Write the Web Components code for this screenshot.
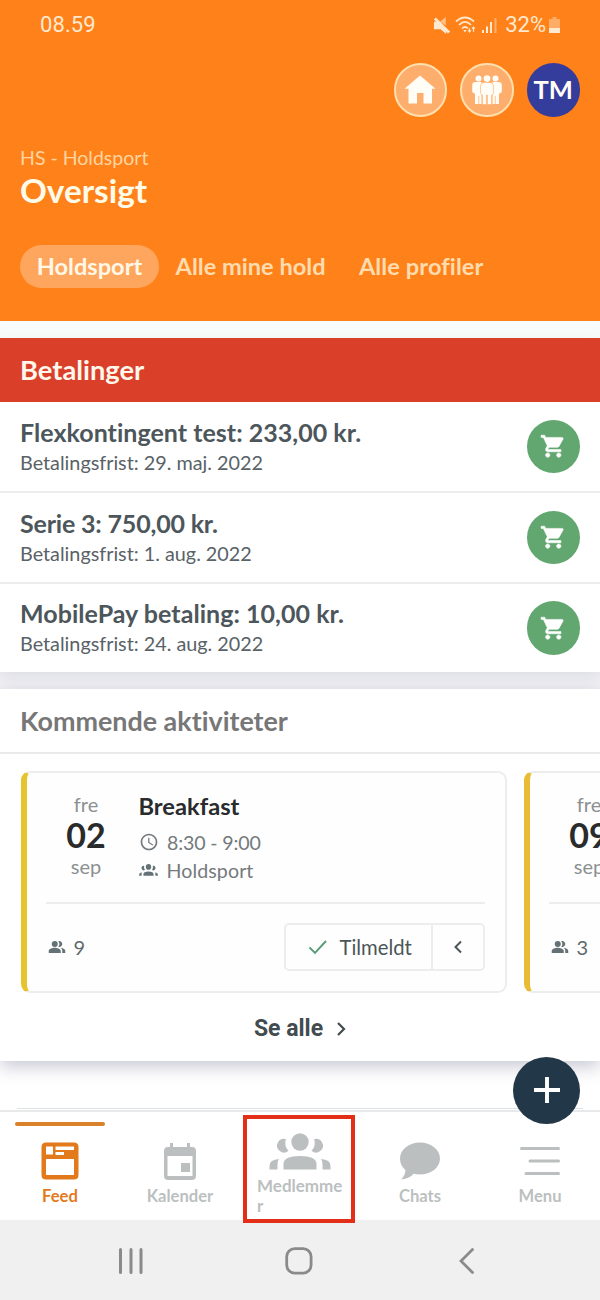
<!DOCTYPE html>
<html lang="da">
<head>
<meta charset="utf-8">
<title>Holdsport</title>
<style>
html,body{margin:0;padding:0}
body{width:600px;height:1300px;overflow:hidden;background:#fff;font-family:Lato,"Open Sans",sans-serif;font-variant-ligatures:none}
</style>
</head>
<body>
<hs-app></hs-app>
<script>
const ICONS = {
  mute:['0 0 18 18','<path d="M1 5h4l3 2.500 6 7V18l-6-5H1z"/><path d="M7.500 5L13.500 0v9z" opacity=".6"/><path d="M2 1.500L17 16.500" stroke="currentColor" stroke-width="3"/>'],
  wifi:['0 0 22 18','<g fill="none" stroke="currentColor" stroke-width="1.700"><path d="M1 5.500Q10 -2.500 19 5.500M4 9Q10 3 16 9M7 12.500Q10 9.500 13 12.500"/></g><path d="M8.300 14h3.400L10 16.500z"/><path d="M14.500 17l-2-2.800h1.400v-2h1.200v2h1.400zM18.500 10l2 2.800h-1.400v3h-1.200v-3h-1.400z"/>'],
  signal:['0 0 16 16','<path d="M0 13h2v3H0zM4 9.500h2V16H4z"/><path d="M8 5h2v11H8z"/><path d="M12.500 1h2v15h-2z" opacity=".45"/>'],
  battery:['0 0 11 17','<path d="M3.500 0h4v2H11v9H0V2h3.500z" opacity=".42"/><path d="M0 11h11v5H0z"/>'],
  home:['0 0 32 30','<path d="M16 .5L31.500 13.700H28V28.500H19.500V18H13V28.500H4.500V13.700H.5z"/>'],
  people:['0 0 32 30','<circle cx="7.500" cy="3.600" r="3"/><circle cx="24.500" cy="3.600" r="3"/><path d="M4.500 7h6v22h-2.300v-8h-.7v8H4V19L1.200 17V10q0-3 3.300-3zM27.500 7h-6v22h2.300v-8h.7v8H28V19l2.800-2V10q0-3-3.300-3z"/><path d="M13 7.500h6q3.500 0 3.500 3.500v7.500L20.600 20v9.500h-4.200V20h-.8v9.500h-4.200V20L9.500 18.500V11Q9.500 7.500 13 7.500z" stroke="#feae6c" stroke-width=".6"/><circle cx="16" cy="3.600" r="3.300"/>'],
  cart:['0 0 24 24','<path d="M7 18c-1.100 0-1.990.9-1.990 2S5.900 22 7 22s2-.9 2-2-.9-2-2-2zM1 2v2h2l3.600 7.590-1.350 2.450c-.16.280-.25.610-.25.960 0 1.100.9 2 2 2h12v-2H7.420c-.14 0-.25-.11-.25-.25l.03-.12.900-1.630h7.450c.75 0 1.410-.41 1.750-1.030l3.580-6.490A1 1 0 0 0 20 4H5.210l-.94-2H1zm16 16c-1.100 0-1.990.9-1.990 2s.89 2 1.990 2 2-.9 2-2-.9-2-2-2z" stroke="currentColor" stroke-width=".5"/>'],
  clock:['0 0 24 24','<path d="M11.990 2C6.470 2 2 6.480 2 12s4.470 10 9.990 10C17.520 22 22 17.520 22 12S17.520 2 11.990 2zM12 20c-4.420 0-8-3.580-8-8s3.580-8 8-8 8 3.580 8 8-3.580 8-8 8zm.5-13H11v6l5.250 3.150.75-1.230-4.500-2.670z"/>'],
  group:['0 0 62 37','<circle cx="31" cy="9" r="8.700"/><path d="M17 6.200a10.500 10.500 0 0 0 2.500 11.500A6.800 6.800 0 1 1 17 6.200zM45 6.200a10.500 10.500 0 0 1-2.500 11.500A6.800 6.800 0 1 0 45 6.200z"/><path d="M14.500 36.500V31q0-8 16.500-8t16.500 8v5.500zM.5 36.500V33q0-6.500 9.500-7-1.500 2-1.500 5v5.500zM61.500 36.500V33q0-6.500-9.500-7 1.500 2 1.500 5v5.500z"/>'],
  duo:['0 0 24 24','<path d="M16.670 13.130C18.040 14.060 19 15.320 19 17v3h4v-3c0-2.180-3.570-3.470-6.330-3.870z"/><circle cx="9" cy="8" r="4"/><path d="M15 12c2.210 0 4-1.790 4-4s-1.790-4-4-4c-.47 0-.91.100-1.330.240a5.980 5.980 0 0 1 0 7.520c.42.140.86.240 1.330.240zM9 13c-2.670 0-8 1.340-8 4v3h16v-3c0-2.660-5.330-4-8-4z"/>'],
  check:['0 0 20 16','<path d="M1.500 8.500L7 14L18 2" fill="none" stroke="currentColor" stroke-width="1.900"/>'],
  left:['0 0 10 14','<path d="M8 1.500L2.500 7L8 12.500" fill="none" stroke="currentColor" stroke-width="2"/>'],
  right:['0 0 10 14','<path d="M2 1L8 7L2 13" fill="none" stroke="currentColor" stroke-width="2.200"/>'],
  feed:['0 0 38 38','<path fill-rule="evenodd" d="M5 .5h28q4.500 0 4.500 4.500v28q0 4.500-4.500 4.500H5Q.5 37.500.5 33V5Q.5.5 5 .5zM5 4.500v8h7v-8zm9.500 0V8H33V4.500zM14.500 10v3H23v-3zM5 17v16h28V17z"/>'],
  calendar:['0 0 34 38','<path fill-rule="evenodd" d="M7 1h3v4h14V1h3v4h2q4 0 4 4v25q0 4-4 4H5q-4 0-4-4V9q0-4 4-4h2zM4.500 14v20h25V14z"/><path d="M18 21h9v9h-9z"/>'],
  chat:['0 0 40 38','<path d="M20 .5C31 .5 40 7.500 40 16.500S31 32.500 20 32.500q-3.500 0-6.500-.8Q10 36.500 1 37.500 5 34 5.500 28 0 23.500 0 16.500C0 7.500 9 .5 20 .5z"/>'],
  menu:['0 0 40 30','<path d="M1.500 2.500H38.500M10 15H38.500M6 27.500H38.500" fill="none" stroke="currentColor" stroke-width="3" stroke-linecap="round"/>'],
  recents:['0 0 26 26','<path d="M2.500 1.500v23M13 1.500v23M23 1.500v23" fill="none" stroke="currentColor" stroke-width="3" stroke-linecap="round"/>'],
  square:['0 0 28 28','<rect x="1.700" y="1.700" width="24.400" height="24.400" rx="8" fill="none" stroke="currentColor" stroke-width="2.800"/>'],
  back:['0 0 16 26','<path d="M13.500 1.500L2 13L13.500 24.500" fill="none" stroke="currentColor" stroke-width="2.800" stroke-linecap="round"/>'],
  plus:['0 0 26 26','<path d="M13 0v26M0 13h26" fill="none" stroke="currentColor" stroke-width="3.900"/>']
};
const define = (name, render) => customElements.define(name, class extends HTMLElement {
  constructor(){ super(); this.attachShadow({mode:'open'}); }
  connectedCallback(){ this.shadowRoot.innerHTML = render(this); }
});
const attr = (el, n) => el.getAttribute(n) || '';

define('hs-icon', el => {
  const [box, body] = ICONS[attr(el,'name')];
  return `<style>:host{display:block;flex:none;width:${attr(el,'w')}px;height:${attr(el,'h')}px}svg{display:block;width:100%;height:100%}</style>
  <svg viewBox="${box}" fill="currentColor" preserveAspectRatio="none">${body}</svg>`;
});

define('hs-status', () => `<style>
:host{display:flex;align-items:center;height:50px;padding:0 40px;color:#ffe9cf;font:22px/50px Roboto,sans-serif}
.time{flex:1;letter-spacing:.1px}.icons{display:flex;align-items:center;gap:5px}
.pct{margin:0 -2px 0 2px}</style>
<span class="time">08.59</span><div class="icons"><hs-icon name="mute" w="17" h="17"></hs-icon><hs-icon name="wifi" w="22" h="18"></hs-icon><hs-icon name="signal" w="16" h="16"></hs-icon><span class="pct">32%</span><hs-icon name="battery" w="11" h="17"></hs-icon></div>`);

define('hs-avatar', el => `<style>
:host{display:flex;align-items:center;justify-content:center;box-sizing:border-box;width:53.500px;height:53.500px;border-radius:50%;color:#fffdf5;background:#feae6c;border:2px solid #fee0ae;font:700 25.500px/1 Lato,sans-serif}
:host([solid]){background:#343c9c;border:0}</style><slot></slot>`);

define('hs-pill', () => `<style>
:host{display:flex;align-items:center;height:43px;padding:0 16.700px;border-radius:22px;color:#fedcae;font:700 23.600px/43px Lato,sans-serif;white-space:nowrap}
:host([active]){background:#fea65e;color:#fff8e6}</style><slot></slot>`);

define('hs-header', () => `<style>
:host{display:block;height:321px;background:#ff811a}
.avatars{display:flex;justify-content:flex-end;gap:13px;padding:13px 20px 0}
.club{margin:29.500px 20px 0;color:#fed5a0;font-size:19.500px;line-height:24px}
h1{margin:0 20px 0;color:#fffbe9;font-size:33.300px;line-height:40px;font-weight:700}
nav{display:flex;margin:35px 0 0 20px}</style>
<hs-status></hs-status>
<div class="avatars"><hs-avatar><hs-icon name="home" w="32" h="30"></hs-icon></hs-avatar><hs-avatar><hs-icon name="people" w="32" h="30"></hs-icon></hs-avatar><hs-avatar solid>TM</hs-avatar></div>
<div class="club">HS - Holdsport</div><h1>Oversigt</h1>
<nav><hs-pill active>Holdsport</hs-pill><hs-pill>Alle mine hold</hs-pill><hs-pill style="font-variant-ligatures:normal;letter-spacing:.1px">Alle profiler</hs-pill></nav>`);

define('hs-payment', () => `<style>
:host{display:flex;align-items:center;box-sizing:border-box;height:91px;padding:0 20px;border-bottom:2px solid #ecedee}
:host([last]){border:0}
.text{flex:1}.title{color:#4c565b;font-weight:700;font-size:25px;line-height:30px}
.due{color:#596267;font-size:19.800px;line-height:30px}
.btn{display:flex;align-items:center;justify-content:center;width:53.500px;height:53.500px;border-radius:50%;background:#62a770;color:#fff}</style>
<div class="text"><div class="title"><slot name="title"></slot></div><div class="due"><slot></slot></div></div>
<div class="btn"><hs-icon name="cart" w="26.500" h="26.500"></hs-icon></div>`);

define('hs-payments', () => `<style>
:host{display:block;margin-top:17px;height:334px;position:relative;box-shadow:0 5px 12px rgba(90,90,130,.12)}
h2{margin:0;height:64px;padding:0 20px;background:#d93f29;color:#fff7ec;font-size:27.300px;line-height:64px;font-weight:700}
</style><h2>Betalinger</h2><slot></slot>`);

define('hs-activity', el => `<style>
:host{display:block;flex:none;box-sizing:border-box;width:486px;height:222px;padding:18px 20px 0 19px;border:2px solid #ecedee;border-left:6px solid var(--accent,#e5c42e);border-radius:9px;background:#fefefe}
.top{display:grid;grid-template-columns:80px 1fr;column-gap:12.500px;height:111px;border-bottom:2px solid #ecedee}
.date{display:flex;flex-direction:column;align-items:center;color:#8b9091;font-size:20px;line-height:26px}
.day{color:#292b2c;font-size:34px;line-height:36px;font-weight:700}
.name{color:#292b2c;font-size:23.700px;line-height:30px;font-weight:700;margin-bottom:7px}
.line{display:flex;align-items:center;gap:8.500px;height:28px;color:#73797c;font-size:19.600px;white-space:nowrap}
.foot{display:flex;align-items:center;height:86px}
.count{display:flex;align-items:center;gap:8px;flex:1;color:#60696c;font-size:20px;padding-left:1.500px}
.seg{display:flex;box-sizing:border-box;width:201px;height:48px;border:2px solid #ecedee;border-radius:5px}
.main{display:flex;align-items:center;gap:11.500px;flex:1;padding-left:22px;font-size:20.300px;color:#4c5558;border-right:2px solid #ecedee}
.arrow{display:flex;align-items:center;justify-content:center;width:50px;color:#4c5558}
.green{color:#5a9c78}.ic{color:#647276}</style>
<div class="top"><div class="date"><span>${attr(el,'weekday')}</span><span class="day">${attr(el,'day')}</span><span>${attr(el,'month')}</span></div>
<div><div class="name"><slot></slot></div>
<div class="line"><hs-icon name="clock" w="20" h="20"></hs-icon><span style="letter-spacing:-.15px">${attr(el,'time')}</span></div>
<div class="line" style="gap:9px;letter-spacing:.1px"><hs-icon class="ic" name="group" w="19" h="12"></hs-icon><span>${attr(el,'team')}</span></div></div></div>
<div class="foot"><div class="count"><hs-icon class="ic" name="duo" w="18" h="18"></hs-icon><span>${attr(el,'count')}</span></div>
${attr(el,'status') ? `<div class="seg"><div class="main"><hs-icon class="green" name="check" w="20" h="16"></hs-icon><span>${attr(el,'status')}</span></div><div class="arrow"><hs-icon name="left" w="10" h="14"></hs-icon></div></div>` : ''}</div>`);

define('hs-upcoming', () => `<style>
:host{display:block;position:relative;box-sizing:border-box;height:372px;margin-top:17px;background:#fff;box-shadow:0 6px 16px rgba(80,80,120,.30)}
h2{box-sizing:border-box;margin:0;height:65px;padding:0 20px;border-bottom:2px solid #e8eaeb;color:#777;font-size:26.900px;line-height:64px;font-weight:700}
.cards{display:flex;gap:17px;padding:17px 0 0 21px;overflow:hidden}
.all{display:flex;align-items:center;justify-content:center;gap:13px;height:72px;font:700 23px/72px Roboto,sans-serif;color:#424b4f}</style>
<h2>Kommende aktiviteter</h2><div class="cards"><slot></slot></div>
<div class="all"><span>Se alle</span><hs-icon name="right" w="10" h="14"></hs-icon></div>`);

define('hs-tab', el => `<style>
:host{display:flex;flex-direction:column;align-items:center;box-sizing:border-box;width:120px;height:108px;color:#bcbfc0;font-weight:700;font-size:16.600px;line-height:20px}
.bar{width:90px;height:4px;margin-top:10px;border-radius:2px}
:host([active]) .bar{background:#d9822b}:host([active]){color:#e27a1c}
.pic{display:flex;align-items:center;height:38px;margin-top:16px}
.label{margin-top:6px}
:host([wide]) .pic{margin-top:6px}
:host([wide]) .label{width:86px;overflow-wrap:anywhere;margin-top:6px;font-size:17px}</style>
<div class="bar"></div><div class="pic"><hs-icon name="${attr(el,'icon')}" w="${attr(el,'w')}" h="${attr(el,'h')}"></hs-icon></div><div class="label"><slot></slot></div>`);

define('hs-tabbar', () => `<style>
:host{display:flex;position:relative;width:600px;height:108px;background:#fff;border-top:2px solid #e8e9ea}
.mark{position:absolute;box-sizing:border-box;left:243px;top:3px;width:111.500px;height:108px;border:4px solid #e32e18}</style>
<slot></slot><div class="mark"></div>`);

define('hs-sysnav', () => `<style>
:host{display:flex;align-items:center;justify-content:space-between;box-sizing:border-box;height:80px;padding:2px 125px 0 118px;background:#f0f0f0;color:#8a8a8a}
.sq{position:relative;left:-3px}</style>
<hs-icon name="recents" w="26" h="26"></hs-icon><hs-icon class="sq" name="square" w="28" h="28"></hs-icon><hs-icon name="back" w="16" h="26"></hs-icon>`);

define('hs-app', () => `<style>
:host{display:block;position:relative;width:600px;height:1300px;background:#fff}
.feed{display:flow-root;height:789px;overflow:hidden;position:relative;background:linear-gradient(#f7fcfa 0 60px,#f0f0f4 60px 700px,#fff 700px)}
hs-payments,hs-payment{background:#fff}
.next{margin:47px 17px 0;height:1px;background:#e0e1e2}
.fab{position:absolute;left:513px;top:1056.500px;width:67px;height:67px;border-radius:50%;background:#223849;color:#fff;display:flex;align-items:center;justify-content:center}
</style>
<hs-header></hs-header>
<div class="feed">
<hs-payments>
<hs-payment><span slot="title" style="letter-spacing:.03px">Flexkontingent test: 233,00 kr.</span>Betalingsfrist: 29. maj. 2022</hs-payment>
<hs-payment><span slot="title" style="letter-spacing:-.18px">Serie 3: 750,00 kr.</span>Betalingsfrist: 1. aug. 2022</hs-payment>
<hs-payment last style="height:88px"><span slot="title" style="letter-spacing:.04px">MobilePay betaling: 10,00 kr.</span>Betalingsfrist: 24. aug. 2022</hs-payment>
</hs-payments>
<hs-upcoming>
<hs-activity weekday="fre" day="02" month="sep" time="8:30 - 9:00" team="Holdsport" count="9" status="Tilmeldt">Breakfast</hs-activity>
<hs-activity style="--accent:#e8bd35" weekday="fre" day="09" month="sep" time="" team="" count="3"></hs-activity>
</hs-upcoming>
<div class="next"></div>
</div>
<hs-tabbar>
<hs-tab active icon="feed" w="38" h="38">Feed</hs-tab>
<hs-tab icon="calendar" w="34" h="38">Kalender</hs-tab>
<hs-tab wide icon="group" w="62" h="37">Medlemmer</hs-tab>
<hs-tab icon="chat" w="40" h="38">Chats</hs-tab>
<hs-tab icon="menu" w="40" h="30">Menu</hs-tab>
</hs-tabbar>
<hs-sysnav></hs-sysnav>
<div class="fab"><hs-icon name="plus" w="26" h="26"></hs-icon></div>`);
</script>
</body>
</html>
